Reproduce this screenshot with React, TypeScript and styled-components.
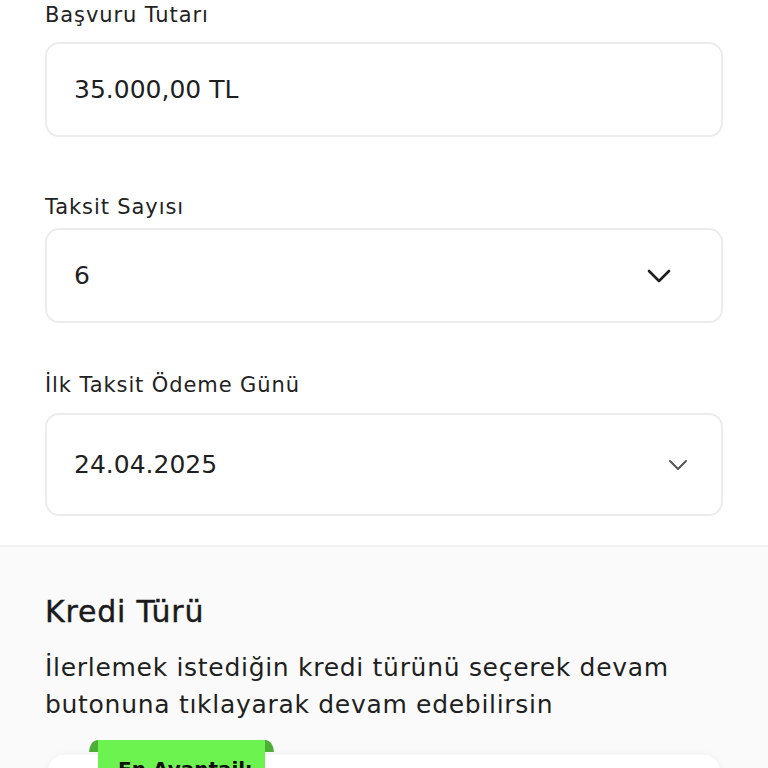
import styled, { createGlobalStyle } from 'styled-components'

const GlobalStyle = createGlobalStyle`
  html, body {
    margin: 0;
    padding: 0;
    background: #ffffff;
    font-family: 'DejaVu Sans', 'Open Sans', sans-serif;
    color: #1f1f1f;
  }
`

type FieldProps = {
  label: string
  value: string
  chevron?: 'bold' | 'light'
  tall?: boolean
  gap: number
  top: number
}

function Field({ label, value, chevron, tall, gap, top }: FieldProps) {
  return (
    <FieldWrap $top={top}>
      <Label $gap={gap}>{label}</Label>
      <InputBox $tall={tall}>
        <Value>{value}</Value>
        {chevron === 'bold' && (
          <Chevron width="24" height="14" viewBox="0 0 24 14" $right={50}>
            <path d="M2 2 L12 12 L22 2" fill="none" stroke="#1f1f1f" strokeWidth="2.6" strokeLinecap="round" strokeLinejoin="round" />
          </Chevron>
        )}
        {chevron === 'light' && (
          <Chevron width="20" height="12" viewBox="0 0 20 12" $right={33}>
            <path d="M2 2 L10 10 L18 2" fill="none" stroke="#555555" strokeWidth="2" strokeLinecap="round" strokeLinejoin="round" />
          </Chevron>
        )}
      </InputBox>
    </FieldWrap>
  )
}

export default function App() {
  return (
    <Page>
      <GlobalStyle />
      <FormSection>
        <Field label="Başvuru Tutarı" value="35.000,00 TL" gap={15} top={3} />
        <Field label="Taksit Sayısı" value="6" chevron="bold" gap={9} top={58} />
        <Field label="İlk Taksit Ödeme Günü" value="24.04.2025" chevron="light" tall gap={16} top={50} />
      </FormSection>
      <TypeSection>
        <Title>Kredi Türü</Title>
        <Desc>İlerlemek istediğin kredi türünü seçerek devam butonuna tıklayarak devam edebilirsin</Desc>
        <OptionCard>
          <Ribbon>
            <RibbonText>En Avantajlı</RibbonText>
          </Ribbon>
        </OptionCard>
      </TypeSection>
    </Page>
  )
}

const Page = styled.div`
  width: 768px;
  height: 768px;
  overflow: hidden;
  background: #ffffff;
`

const FormSection = styled.div`
  padding: 0 45px 29px;
  display: flex;
  flex-direction: column;
`

const FieldWrap = styled.div<{ $top: number }>`
  margin-top: ${(p) => p.$top}px;
  display: flex;
  flex-direction: column;
`

const Label = styled.div<{ $gap: number }>`
  font-size: 21px;
  line-height: 24px;
  letter-spacing: 0.9px;
  color: #222222;
  margin-bottom: ${(p) => p.$gap}px;
`

const InputBox = styled.div<{ $tall?: boolean }>`
  position: relative;
  box-sizing: border-box;
  height: ${(p) => (p.$tall ? 103 : 95)}px;
  border: 2px solid #ececec;
  border-radius: 14px;
  background: #ffffff;
  display: flex;
  align-items: center;
  padding-left: 27px;
`

const Value = styled.span`
  font-size: 25px;
  color: #1f1f1f;
`

const Chevron = styled.svg<{ $right: number }>`
  position: absolute;
  right: ${(p) => p.$right}px;
  top: 50%;
  transform: translateY(-50%);
`

const TypeSection = styled.div`
  background: #fafafa;
  border-top: 2px solid #f1f1f1;
  padding: 47px 45px 0;
  display: flex;
  flex-direction: column;
`

const Title = styled.div`
  font-size: 30px;
  font-weight: 500;
  line-height: 36px;
  letter-spacing: 0.8px;
  color: #1a1a1a;
  -webkit-text-stroke: 0.4px #1a1a1a;
`

const Desc = styled.div`
  margin-top: 19px;
  font-size: 25px;
  line-height: 37px;
  letter-spacing: 0.7px;
  color: #1f1f1f;
`

const OptionCard = styled.div`
  position: relative;
  margin: 32px 3px 0;
  height: 120px;
  background: #ffffff;
  border-radius: 16px;
  box-shadow: 0 0 10px rgba(0, 0, 0, 0.05);
`

const Ribbon = styled.div`
  position: absolute;
  left: 50px;
  top: -15px;
  width: 167px;
  height: 60px;
  background: #6df350;
  &::before,
  &::after {
    content: '';
    position: absolute;
    top: 0;
    width: 9px;
    height: 12px;
    background: #4cae37;
  }
  &::before {
    left: -9px;
    border-top-left-radius: 9px 12px;
  }
  &::after {
    right: -9px;
    border-top-right-radius: 9px 12px;
  }
`

const RibbonText = styled.div`
  padding: 17px 0 0 20px;
  font-size: 20px;
  font-weight: 700;
  color: #111111;
`
